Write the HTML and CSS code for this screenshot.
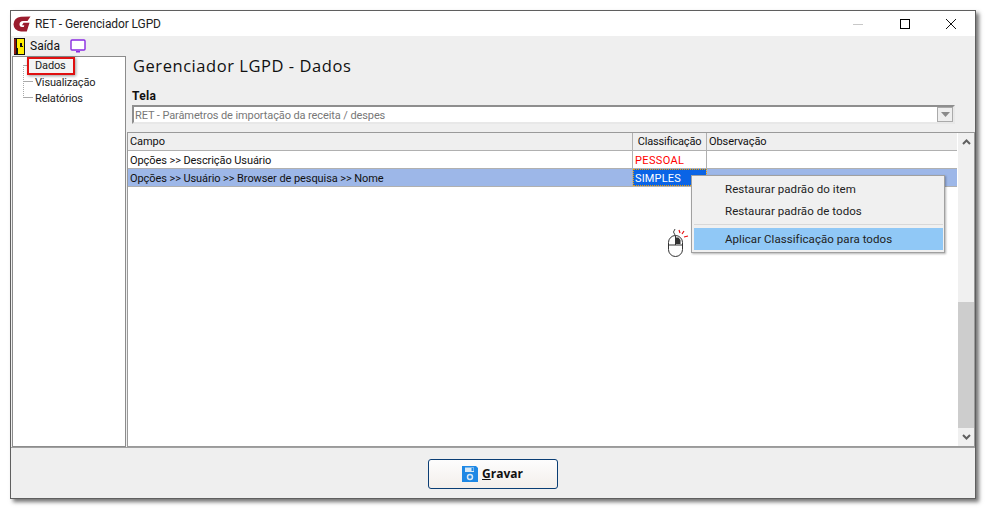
FILE: index.html
```html
<!DOCTYPE html>
<html lang="pt">
<head>
<meta charset="utf-8">
<title>RET - Gerenciador LGPD</title>
<link rel="stylesheet" href="styles.css">
</head>
<body>
<div class="window">
  <header class="titlebar">
    <svg class="logo" width="18" height="18" viewBox="0 0 18 18"><path d="M17.500 1.500L14.500 6H10Q6.800 6.300 6.500 9 6.400 11.800 9 12H10.800L11.300 10.300H9L10.500 7.800H16.500L13.800 16.500H8Q.8 16 .5 9.300 1 2.500 8 1.800Z" fill="#9b1c2e"/></svg>
    <span class="title">RET - Gerenciador LGPD</span>
    <div class="winctl">
      <svg width="46" height="26" viewBox="0 0 46 26"><path d="M17 13.500H27" stroke="#c8c8c8"/></svg>
      <svg width="46" height="26" viewBox="0 0 46 26"><rect x="18.500" y="8.500" width="9" height="9" fill="none" stroke="#000"/></svg>
      <svg width="46" height="26" viewBox="0 0 46 26"><path d="M18 8L28 18M28 8L18 18" stroke="#111" fill="none"/></svg>
    </div>
  </header>
  <div class="toolbar">
    <svg width="11" height="17" viewBox="0 0 11 17"><rect width="11" height="17" fill="#111"/><rect x="0" y="1" width="2" height="15" fill="#8a1a12"/><path d="M3 1H10V16H4V10H3Z" fill="#ffee00"/><path d="M6 5H8V8H9V9H6Z" fill="#111"/></svg>
    <span class="tool-label">Saída</span>
    <svg class="monitor" width="16" height="15" viewBox="0 0 16 15"><rect x="1" y="1" width="14" height="10" rx="1" fill="#fff" stroke="#8a2be2" stroke-width="1.400"/><rect x="6" y="12" width="4" height="1.500" fill="#8a2be2"/></svg>
  </div>
  <main class="body">
    <nav class="tree">
      <div class="tree-line"></div>
      <div class="tree-item selected">Dados</div>
      <div class="tree-item">Visualização</div>
      <div class="tree-item">Relatórios</div>
    </nav>
    <section class="content">
      <h1 class="heading">Gerenciador LGPD - Dados</h1>
      <label class="field-label">Tela</label>
      <div class="combo">
        <span class="combo-text">RET - Parâmetros de importação da receita / despes</span>
        <span class="combo-btn"><svg width="9" height="5" viewBox="0 0 9 5"><path d="M0 0H9L4.500 5Z" fill="#8a8a8a"/></svg></span>
      </div>
      <div class="grid">
        <div class="grid-main">
          <div class="row head">
            <div class="cell c1">Campo</div>
            <div class="cell c2 center">Classificação</div>
            <div class="cell c3">Observação</div>
          </div>
          <div class="row">
            <div class="cell c1">Opções &gt;&gt; Descrição Usuário</div>
            <div class="cell c2 red">PESSOAL</div>
            <div class="cell c3"></div>
          </div>
          <div class="row active">
            <div class="cell c1">Opções &gt;&gt; Usuário &gt;&gt; Browser de pesquisa &gt;&gt; Nome</div>
            <div class="cell c2 focus">SIMPLES</div>
            <div class="cell c3"></div>
          </div>
        </div>
        <div class="scrollbar">
          <svg class="arrow" width="17" height="18" viewBox="0 0 17 18"><path d="M5 11L8.500 7.500L12 11" stroke="#606060" stroke-width="2" fill="none"/></svg>
          <div class="track"><div class="thumb"></div></div>
          <svg class="arrow" width="17" height="18" viewBox="0 0 17 18"><path d="M5 7L8.500 10.500L12 7" stroke="#606060" stroke-width="2" fill="none"/></svg>
        </div>
      </div>
    </section>
  </main>
  <footer class="footer">
    <button class="save" type="button">
      <svg width="16" height="16" viewBox="0 0 16 16"><path d="M0 0H14L16 2V16H0Z" fill="#1e88e5"/><rect x="3" y="1.500" width="9" height="4.500" fill="#d8e8f5"/><rect x="9.500" y="2" width="2" height="3" fill="#1e88e5"/><circle cx="8" cy="11" r="2.500" fill="none" stroke="#d8e8f5" stroke-width="1.500"/></svg>
      <span><u>G</u>ravar</span>
    </button>
  </footer>
  <div class="menu">
    <div class="menu-item">Restaurar padrão do item</div>
    <div class="menu-item">Restaurar padrão de todos</div>
    <div class="menu-sep"></div>
    <div class="menu-item hot">Aplicar Classificação para todos</div>
  </div>
  <svg class="mouse" width="24" height="34" viewBox="0 0 24 34">
    <path d="M9 8Q6 5 9 2" stroke="#444" fill="none"/>
    <rect x="2.500" y="8.500" width="14" height="21" rx="7" fill="#fff" stroke="#333"/>
    <path d="M2.500 18H16.500M9.500 8.500V18" stroke="#333"/>
    <path d="M10 10.500H12.500L14.500 13V17H10Z" fill="#333"/>
    <path d="M13 3L14 6M18 4L16 7M22 9L18 10" stroke="#e81010" stroke-width="1.200"/>
  </svg>
</div>
</body>
</html>
```
FILE: styles.css
```css
* { box-sizing: border-box; }
html, body { margin: 0; height: 100%; background: #fff; overflow: hidden; }
body { padding: 10px 0 0 10px; font-family: Roboto, "Open Sans", sans-serif; color: #111; }

.window {
  position: relative;
  width: 966px;
  height: 489px;
  display: flex;
  flex-direction: column;
  background: #efefef;
  border: 1px solid #5f5f5f;
  box-shadow: 3px 3px 4px rgba(0,0,0,.55);
}
.titlebar {
  height: 25px;
  background: #fff;
  display: flex;
  align-items: center;
  padding-left: 2px;
  flex: none;
}
.logo { flex: none; }
.title { margin-left: 4px; font-size: 12px; letter-spacing: -.1px; color: #222; }
.winctl { margin-left: auto; display: flex; margin-right: 1px; }
.toolbar {
  height: 20px;
  flex: none;
  display: flex;
  align-items: center;
  padding-left: 3px;
}
.tool-label { margin-left: 5px; font-size: 12px; }
.monitor { margin-left: 10px; }
.body { flex: 1; display: flex; min-height: 0; padding-left: 1px; }
.tree {
  position: relative;
  width: 114px;
  flex: none;
  background: #fff;
  border: 1px solid #8c8c8c;
  padding: 1px 0 0 14px;
  font-size: 11px;
}
.tree-line {
  position: absolute;
  left: 10px;
  top: 8px;
  width: 10px;
  height: 33px;
  border-left: 1px dotted #aaa;
  background: repeating-linear-gradient(to bottom, #aaa 0 1px, transparent 1px 16px) no-repeat;
}
.tree-item { position: relative; height: 16px; line-height: 16px; padding-left: 8px; color: #222; white-space: nowrap; letter-spacing: -.15px; }
.selected { width: 48px; height: 18px; margin: -1px 0 0; border: 2px solid #e01010; padding-left: 6px; background: #f4f4f4; box-shadow: 1px 1px 3px rgba(0,0,0,.4); line-height: 14px; }
.content { flex: 1; min-width: 0; display: flex; flex-direction: column; }
.heading {
  margin: 0 0 0 7px;
  height: 33px;
  font-family: "Open Sans", sans-serif;
  font-size: 16.500px;
  line-height: 20px;
  font-weight: 400;
  letter-spacing: .55px;
  color: #111;
}
.field-label { margin-left: 6px; font-size: 12px; font-weight: 700; line-height: 14px; height: 16px; letter-spacing: .3px; }
.combo {
  margin: 0 20px 0 6px;
  height: 19px;
  flex: none;
  background: #fff;
  border: 2px solid #8e8e8e;
  border-right-color: #e8e8e8;
  border-bottom-color: #e8e8e8;
  display: flex;
  align-items: center;
  justify-content: space-between;
}
.combo-text { font-size: 11px; line-height: 15px; padding: 1px 0 0 1px; color: #777; letter-spacing: -.1px; }
.combo-btn { width: 16px; height: 15px; background: #eee; border: 1px solid #aaa; display: flex; align-items: center; justify-content: center; }
.grid {
  flex: 1;
  margin: 8px 0 0 1px;
  min-height: 0;
  background: #fff;
  border: 1px solid #9a9a9a;
  display: flex;
}
.grid-main { flex: 1; min-width: 0; }
.row { display: flex; height: 18px; border-bottom: 1px solid #b0b0b0; font-size: 11px; line-height: 19px; }
.row.head { background: #efefef; }
.row.head .cell { line-height: 18px; }
.row.active { background: #9db7e8; }
.cell { padding-left: 2px; border-right: 1px solid #b0b0b0; white-space: nowrap; overflow: hidden; letter-spacing: -.08px; }
.c1 { width: 505px; }
.c2 { width: 74px; padding-left: 2px; }
.c3 { flex: 1; border-right: 0; }
.center { text-align: center; padding-left: 0; letter-spacing: -.2px; }
.red { color: #f00; letter-spacing: .35px; }
.focus { background: #0a64e6; color: #fff; outline: 1px dotted #f0a000; outline-offset: -1px; letter-spacing: .15px; }
.scrollbar { width: 17px; flex: none; background: #f0f0f0; display: flex; flex-direction: column; border-left: 1px solid #fff; }
.arrow { flex: none; }
.track { flex: 1; display: flex; flex-direction: column; justify-content: flex-end; }
.thumb { height: 126px; background: #cdcdcd; }
.footer {
  height: 51px;
  flex: none;
  display: flex;
  justify-content: center;
  align-items: center;
  border-top: 1px solid #a0a0a0;
}
.save {
  width: 130px;
  height: 30px;
  margin: 1px 0 0 -1px;
  display: flex;
  align-items: center;
  justify-content: center;
  gap: 4px;
  background: linear-gradient(#fdfdfd, #f3efeb);
  border: 1px solid #0a3d74;
  border-radius: 3px;
  font: 700 12px "Open Sans", sans-serif;
  color: #111;
}
.menu {
  position: absolute;
  left: 680px;
  top: 164px;
  width: 254px;
  height: 78px;
  background: #f0f0f0;
  border: 1px solid #a0a0a0;
  box-shadow: 1px 1px 2px rgba(0,0,0,.3);
  padding: 2px 1px 1px 2px;
  font-size: 11.500px;
  letter-spacing: .06px;
}
.menu-item { height: 22px; line-height: 22px; padding-left: 31px; color: #222; }
.menu-sep { height: 1px; margin: 2px 0 3px; background: #d8d8d8; }
.hot { background: #90c8f6; }
.mouse { position: absolute; left: 655px; top: 216px; }
```
